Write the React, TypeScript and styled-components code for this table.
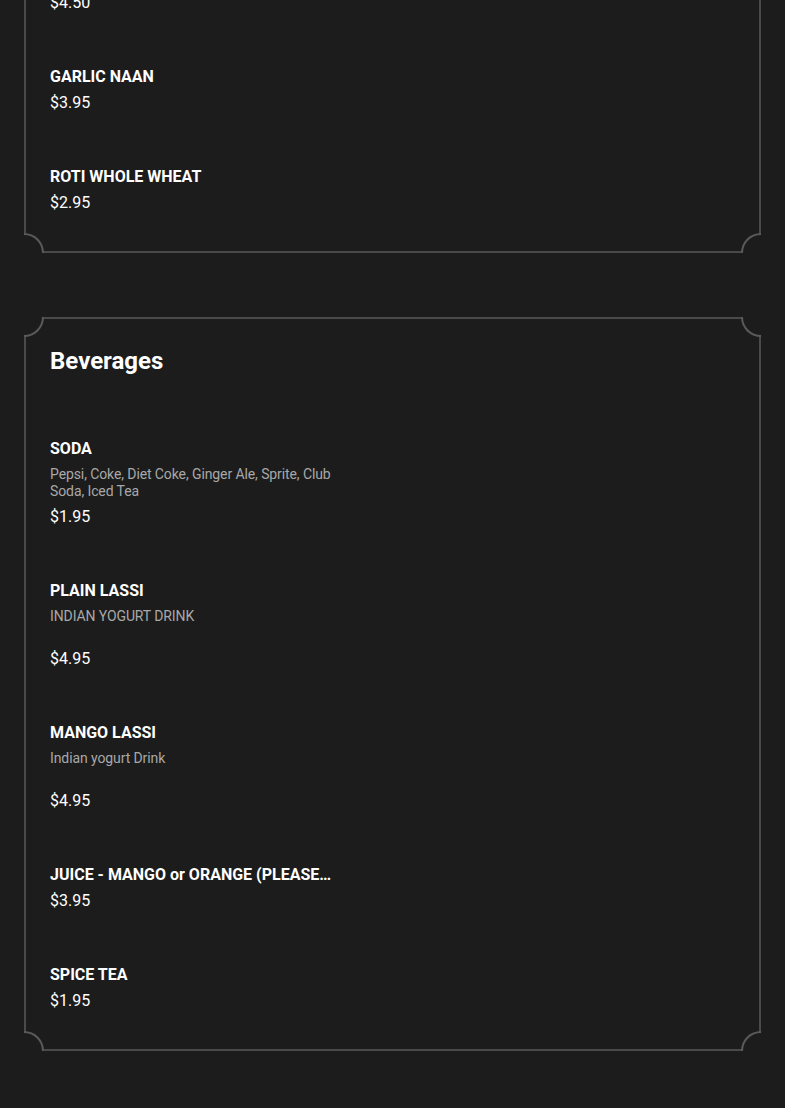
import styled, { createGlobalStyle } from "styled-components";

type Item = { name: string; price: string; desc?: string };

const breads: Item[] = [
  { name: "PLAIN NAAN", price: "$4.50" },
  { name: "GARLIC NAAN", price: "$3.95" },
  { name: "ROTI WHOLE WHEAT", price: "$2.95" },
];

const beverages: Item[] = [
  { name: "SODA", desc: "Pepsi, Coke, Diet Coke, Ginger Ale, Sprite, Club Soda, Iced Tea", price: "$1.95" },
  { name: "PLAIN LASSI", desc: "INDIAN YOGURT DRINK", price: "$4.95" },
  { name: "MANGO LASSI", desc: "Indian yogurt Drink", price: "$4.95" },
  { name: "JUICE - MANGO or ORANGE (PLEASE SPECIFY)", price: "$3.95" },
  { name: "SPICE TEA", price: "$1.95" },
];

const MenuItem = ({ item }: { item: Item }) => (
  <ItemBox>
    <ItemName>{item.name}</ItemName>
    {item.desc && <ItemDesc>{item.desc}</ItemDesc>}
    <ItemPrice $tight={!item.desc}>{item.price}</ItemPrice>
  </ItemBox>
);

const Section = ({ title, items, $first }: { title?: string; items: Item[]; $first?: boolean }) => (
  <Card $first={$first}>
    <Corner $pos="tl" />
    <Corner $pos="tr" />
    <Corner $pos="bl" />
    <Corner $pos="br" />
    {title && <Title>{title}</Title>}
    <ItemList>
      {items.map((it) => (
        <MenuItem key={it.name} item={it} />
      ))}
    </ItemList>
  </Card>
);

export default function App() {
  return (
    <>
      <GlobalStyle />
      <Page>
        <Section items={breads} $first />
        <Section title="Beverages" items={beverages} />
      </Page>
    </>
  );
}

const GlobalStyle = createGlobalStyle`
  html, body {
    margin: 0;
    padding: 0;
    background: #1c1c1c;
    font-family: Roboto, "Liberation Sans", sans-serif;
    color: #fff;
  }
  * { box-sizing: border-box; }
`;

const Page = styled.div`
  display: flex;
  flex-direction: column;
  gap: 64px;
  padding: 0 24px 60px;
  overflow: hidden;
`;

const Card = styled.section<{ $first?: boolean }>`
  position: relative;
  border: 2px solid #4a4a4a;
  padding: 26px 24px 36px;
  margin-top: ${(p) => (p.$first ? "-63px" : "0")};
`;

const cornerStyles = {
  tl: "top: -2px; left: -2px; border-right-width: 2px; border-bottom-width: 2px; border-bottom-right-radius: 100%;",
  tr: "top: -2px; right: -2px; border-left-width: 2px; border-bottom-width: 2px; border-bottom-left-radius: 100%;",
  bl: "bottom: -2px; left: -2px; border-right-width: 2px; border-top-width: 2px; border-top-right-radius: 100%;",
  br: "bottom: -2px; right: -2px; border-left-width: 2px; border-top-width: 2px; border-top-left-radius: 100%;",
};

const Corner = styled.span<{ $pos: keyof typeof cornerStyles }>`
  position: absolute;
  width: 20px;
  height: 20px;
  background: #1c1c1c;
  border: 0 solid #5a5a5a;
  ${(p) => cornerStyles[p.$pos]}
`;

const Title = styled.h2`
  margin: 0 0 60px;
  font-size: 24px;
  line-height: 32px;
  font-weight: 700;
  color: #fff;
`;

const ItemList = styled.div`
  display: flex;
  flex-direction: column;
  gap: 50px;
`;

const ItemBox = styled.div`
  display: flex;
  flex-direction: column;
  width: 284px;
`;

const ItemName = styled.div`
  font-size: 16px;
  line-height: 24px;
  font-weight: 700;
  color: #fff;
  white-space: nowrap;
  overflow: hidden;
  text-overflow: ellipsis;
`;

const ItemDesc = styled.div`
  width: 294px;
  margin-top: 5px;
  font-size: 14px;
  line-height: 17px;
  min-height: 34px;
  color: #a8a8a8;
  letter-spacing: -0.1px;
`;

const ItemPrice = styled.div<{ $tight?: boolean }>`
  margin-top: ${(p) => (p.$tight ? "2px" : "5px")};
  font-size: 16px;
  line-height: 24px;
  color: #fff;
`;
